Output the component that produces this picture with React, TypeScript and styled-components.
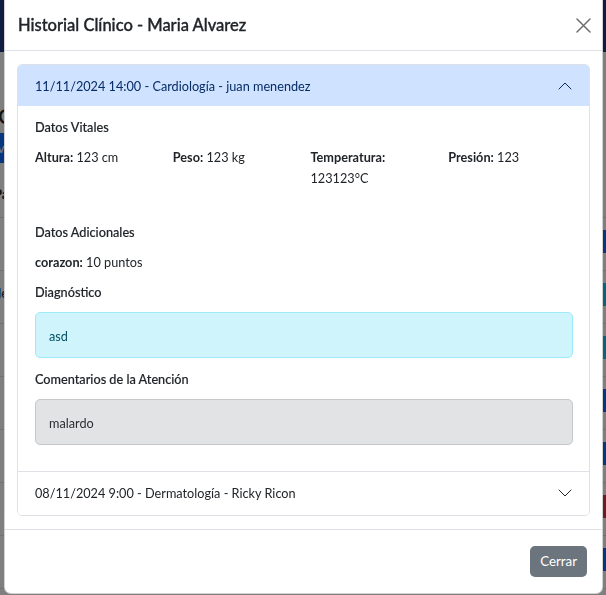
import React from "react";
import styled, { createGlobalStyle } from "styled-components";

const GlobalStyle = createGlobalStyle`
  html, body { margin: 0; padding: 0; }
  body {
    overflow: hidden;
    background: #ffffff;
    font-family: Lato, "Open Sans", sans-serif;
    color: #212529;
  }
  * { box-sizing: border-box; }
`;

/* ---------- page behind the modal ---------- */
const Page = styled.div`
  width: 606px;
  height: 595px;
  overflow: hidden;
  background: #ffffff;
`;
const Navbar = styled.nav`
  height: 52px;
  background: #1e3a80;
`;
const PageHeading = styled.h2`
  margin: 50px 0 0 -2px;
  font-size: 22px;
  line-height: 28px;
  font-weight: 500;
`;
const NewButton = styled.button`
  display: block;
  margin: 3px 0 0 -40px;
  height: 30px;
  padding: 0 14px;
  border: none;
  border-radius: 5px;
  background: #0d6efd;
  color: #fff;
  font: inherit;
  font-size: 13px;
`;
const Table = styled.div`
  margin-top: 7px;
`;
const TableRow = styled.div<{ $head?: boolean }>`
  display: flex;
  align-items: flex-start;
  justify-content: space-between;
  height: ${(p) => (p.$head ? 48 : 53)}px;
  padding-top: ${(p) => (p.$head ? 14 : 12)}px;
  border-bottom: 1px solid #dee2e6;
  font-size: 13px;
  font-weight: ${(p) => (p.$head ? 700 : 400)};
  margin-right: -30px;
`;
const Cell = styled.span`
  margin-left: -6px;
  line-height: 20px;
  min-width: 10px;
`;
const ActionButton = styled.span<{ $color: string }>`
  display: inline-block;
  width: 60px;
  height: 23px;
  border-radius: 4px;
  background: ${(p) => p.$color};
`;

/* ---------- overlay + modal ---------- */
const Backdrop = styled.div`
  position: fixed;
  inset: 0;
  background: rgba(0, 0, 0, 0.5);
`;
const Modal = styled.div`
  position: fixed;
  left: 4px;
  top: 0;
  width: 599px;
  background: #fff;
  border: 1px solid rgba(0, 0, 0, 0.175);
  border-top: none;
  border-radius: 0 0 7px 7px;
  display: flex;
  flex-direction: column;
`;
const ModalHeader = styled.header`
  height: 51px;
  display: flex;
  align-items: center;
  justify-content: space-between;
  padding: 0 11px 0 13px;
  border-bottom: 1px solid #dee2e6;
`;
const ModalTitle = styled.h5`
  margin: 0;
  font-size: 16.5px;
  line-height: 25px;
  font-weight: 500;
  color: #212529;
  -webkit-text-stroke: 0.35px currentColor;
`;
const CloseButton = styled.button`
  width: 16px;
  height: 16px;
  padding: 0;
  border: none;
  background: transparent;
  display: flex;
  align-items: center;
  justify-content: center;
  margin-top: 1px;
`;
const ModalBody = styled.div`
  padding: 13px 12px;
`;
const Accordion = styled.div`
  border: 1px solid #dee2e6;
  border-radius: 5px;
  overflow: hidden;
`;
const AccordionItem = styled.div`
  & + & {
    border-top: 1px solid #dee2e6;
  }
`;
const AccordionButton = styled.button<{ $open?: boolean }>`
  width: 100%;
  height: ${(p) => (p.$open ? 41 : 43)}px;
  display: flex;
  align-items: center;
  justify-content: space-between;
  padding: 0 16px 0 17px;
  border: none;
  background: ${(p) => (p.$open ? "#cfe2ff" : "#ffffff")};
  color: ${(p) => (p.$open ? "#052c65" : "#212529")};
  font-family: inherit;
  font-size: 12.7px;
  line-height: 20px;
  text-align: left;
`;
const Chevron = styled.svg<{ $open?: boolean }>`
  width: 16px;
  height: 16px;
  flex: none;
  transform: ${(p) => (p.$open ? "rotate(180deg)" : "none")};
`;
const AccordionBody = styled.div`
  padding: 13px 16px 13px 17px;
  font-size: 12.7px;
`;
const SectionTitle = styled.h6<{ $mt?: number; $mb?: number }>`
  margin: ${(p) => p.$mt ?? 0}px 0 ${(p) => p.$mb ?? 11}px;
  font-size: 12.7px;
  line-height: 17px;
  font-weight: 500;
  -webkit-text-stroke: 0.15px currentColor;
`;
const VitalsGrid = styled.div`
  display: grid;
  grid-template-columns: repeat(4, 1fr);
  column-gap: 13px;
`;
const Field = styled.p`
  margin: 0;
  line-height: 20.5px;
`;
const Label = styled.strong`
  font-weight: 700;
`;
const Note = styled.div<{ $variant: "info" | "secondary" }>`
  margin-bottom: 13px;
  padding: 13px 13px 11px;
  line-height: 20px;
  border-radius: 5px;
  border: 1px solid ${(p) => (p.$variant === "info" ? "#9eeaf9" : "#c4c8cb")};
  background: ${(p) => (p.$variant === "info" ? "#cff4fc" : "#e2e3e5")};
  color: ${(p) => (p.$variant === "info" ? "#055160" : "#2b2f32")};
`;
const ModalFooter = styled.footer`
  display: flex;
  justify-content: flex-end;
  padding: 16px 15px 16px;
  border-top: 1px solid #dee2e6;
`;
const SecondaryButton = styled.button`
  height: 31px;
  padding: 0 10px;
  border: none;
  border-radius: 5px;
  background: #6c757d;
  color: #ffffff;
  font-family: inherit;
  font-size: 13.3px;
`;

const ChevronIcon = ({ open }: { open?: boolean }) => (
  <Chevron $open={open} viewBox="0 0 16 16">
    <path
      d="M2 5L8 11L14 5"
      fill="none"
      stroke={open ? "#052c65" : "#212529"}
      strokeWidth="1"
      strokeLinecap="round"
      strokeLinejoin="round"
    />
  </Chevron>
);

const actionColors = ["#0d6efd", "#0dcaf0", "#0dcaf0", "#0d6efd", "#0d6efd", "#dc3545", "#0d6efd"];

export default function App() {
  return (
    <>
      <GlobalStyle />
      <Page>
        <Navbar />
        <PageHeading>Consultas</PageHeading>
        <NewButton>Nueva consulta</NewButton>
        <Table>
          <TableRow $head>
            <Cell>Paciente</Cell>
          </TableRow>
          {actionColors.map((c, i) => (
            <TableRow key={i}>
              <Cell>{i === 1 ? "de" : ""}</Cell>
              <ActionButton $color={c} />
            </TableRow>
          ))}
        </Table>
      </Page>
      <Backdrop />
      <Modal>
        <ModalHeader>
          <ModalTitle>Historial Clínico - Maria Alvarez</ModalTitle>
          <CloseButton aria-label="Cerrar">
            <svg width="15" height="15" viewBox="0 0 15 15">
              <path d="M1 1L14 14M14 1L1 14" stroke="#6f6f6f" strokeWidth="1.5" strokeLinecap="round" />
            </svg>
          </CloseButton>
        </ModalHeader>
        <ModalBody>
          <Accordion>
            <AccordionItem>
              <AccordionButton $open>
                <span>11/11/2024 14:00 - Cardiología - juan menendez</span>
                <ChevronIcon open />
              </AccordionButton>
              <AccordionBody>
                <SectionTitle>Datos Vitales</SectionTitle>
                <VitalsGrid>
                  <Field>
                    <Label>Altura:</Label> 123 cm
                  </Field>
                  <Field>
                    <Label>Peso:</Label> 123 kg
                  </Field>
                  <Field>
                    <Label>Temperatura:</Label> 123123°C
                  </Field>
                  <Field>
                    <Label>Presión:</Label> 123
                  </Field>
                </VitalsGrid>
                <SectionTitle $mt={36} $mb={11}>Datos Adicionales</SectionTitle>
                <Field>
                  <Label>corazon:</Label> 10 puntos
                </Field>
                <SectionTitle $mt={11} $mb={11}>Diagnóstico</SectionTitle>
                <Note $variant="info">asd</Note>
                <SectionTitle $mb={11}>Comentarios de la Atención</SectionTitle>
                <Note $variant="secondary">malardo</Note>
              </AccordionBody>
            </AccordionItem>
            <AccordionItem>
              <AccordionButton>
                <span>08/11/2024 9:00 - Dermatología - Ricky Ricon</span>
                <ChevronIcon />
              </AccordionButton>
            </AccordionItem>
          </Accordion>
        </ModalBody>
        <ModalFooter>
          <SecondaryButton>Cerrar</SecondaryButton>
        </ModalFooter>
      </Modal>
    </>
  );
}
